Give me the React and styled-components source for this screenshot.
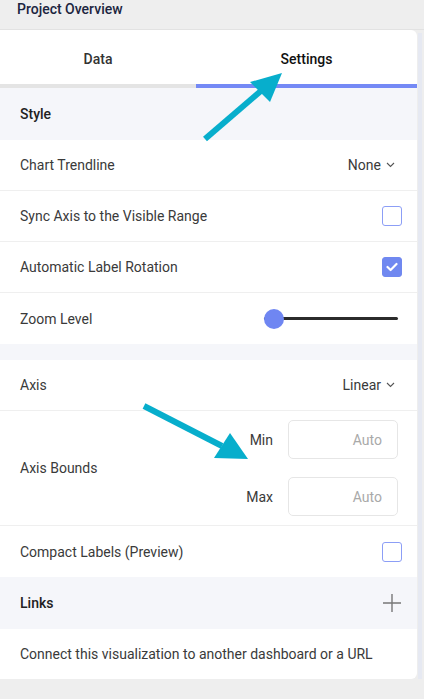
import React from 'react';
import styled, { createGlobalStyle } from 'styled-components';

const GlobalStyle = createGlobalStyle`
  html, body {
    margin: 0;
    padding: 0;
    background: #eeeeee;
  }
  body {
    font-family: Roboto, "Liberation Sans", sans-serif;
    font-size: 14px;
    color: #3a3a3a;
  }
`;

const Page = styled.div`
  position: relative;
  width: 424px;
  height: 699px;
  overflow: hidden;
  background: #eeeeee;
`;

const TopBar = styled.div`
  height: 30px;
  border-bottom: 1px solid #e2e2e2;
  padding: 1px 0 0 17px;
  display: flex;
  align-items: flex-start;
  box-sizing: border-box;
  font-size: 14px;
  font-weight: 500;
  color: #1c2540;
`;

const Body = styled.div`
  display: flex;
  align-items: stretch;
`;

const Panel = styled.div`
  width: 417px;
  background: #ffffff;
  border-radius: 0 6px 6px 0;
  overflow: hidden;
`;

const Scrollbar = styled.div`
  width: 4px;
  margin-left: 1px;
  margin-top: 3px;
  background: #e6e9f2;
`;

const Tabs = styled.div`
  display: grid;
  grid-template-columns: 196px 1fr;
`;

const Tab = styled.div`
  height: 58px;
  box-sizing: border-box;
  padding-top: 4px;
  display: flex;
  align-items: center;
  justify-content: center;
  font-weight: 500;
  color: ${p => (p.$active ? '#111111' : '#333333')};
  border-bottom: 4px solid ${p => (p.$active ? '#7489f5' : '#e4e4e4')};
`;

const SectionHead = styled.div`
  height: 52px;
  background: #f5f6fa;
  display: flex;
  align-items: center;
  justify-content: space-between;
  padding: 0 15px 0 20px;
  font-weight: 500;
  color: #222222;
`;

const Gap = styled.div`
  height: 16px;
  background: #f5f6fa;
`;

const Row = styled.div`
  height: ${p => p.$h || 51}px;
  box-sizing: border-box;
  display: flex;
  align-items: center;
  justify-content: space-between;
  padding: 0 15px 0 20px;
  border-bottom: ${p => (p.$last ? 'none' : '1px solid #efefef')};
`;

const Select = styled.div`
  display: flex;
  align-items: center;
  gap: 5px;
  margin-right: 7px;
`;

const Check = styled.div`
  width: 18px;
  height: 18px;
  border-radius: 3px;
  border: 1px solid ${p => (p.$on ? '#7088f0' : '#8c9ef6')};
  background: ${p => (p.$on ? '#7088f0' : '#ffffff')};
  display: flex;
  align-items: center;
  justify-content: center;
`;

const Slider = styled.div`
  position: relative;
  width: 134px;
  height: 20px;
  display: flex;
  align-items: center;
  margin-right: 4px;
`;

const Track = styled.div`
  flex: 1;
  height: 3px;
  background: #2b2b2b;
  border-radius: 2px;
`;

const Thumb = styled.div`
  position: absolute;
  left: 0;
  top: 0;
  width: 20px;
  height: 20px;
  border-radius: 50%;
  background: #6f86f2;
`;

const Bounds = styled.div`
  display: grid;
  grid-template-columns: auto 110px;
  column-gap: 15px;
  row-gap: 18px;
  align-items: center;
  margin-right: 4px;
`;

const BoundLabel = styled.span`
  text-align: right;
`;

const BoundInput = styled.div`
  height: 39px;
  box-sizing: border-box;
  border: 1px solid #e6e6e6;
  border-radius: 5px;
  display: flex;
  align-items: center;
  justify-content: flex-end;
  padding-right: 15px;
  color: #a9a9a9;
`;

const Desc = styled.div`
  height: 50px;
  display: flex;
  align-items: center;
  padding-left: 20px;
`;

const Arrows = styled.svg`
  position: absolute;
  left: 0;
  top: 0;
  pointer-events: none;
`;

const Chevron = () => (
  <svg width="9" height="6" viewBox="0 0 9 6">
    <polyline points="1,1 4.5,4.5 8,1" fill="none" stroke="#555" strokeWidth="1.1" />
  </svg>
);

const CheckMark = () => (
  <svg width="12" height="10" viewBox="0 0 12 10">
    <polyline points="1.5,5 4.6,8 10.5,2" fill="none" stroke="#fff" strokeWidth="2.2" strokeLinecap="round" strokeLinejoin="round" />
  </svg>
);

const Plus = () => (
  <svg width="20" height="20" viewBox="0 0 20 20">
    <path d="M10 1v18M1 10h18" stroke="#777" strokeWidth="1.4" fill="none" />
  </svg>
);

export default function App() {
  return (
    <Page>
      <GlobalStyle />
      <TopBar>Project Overview</TopBar>
      <Body>
        <Panel>
          <Tabs>
            <Tab>Data</Tab>
            <Tab $active>Settings</Tab>
          </Tabs>
          <SectionHead>Style</SectionHead>
          <Row>
            <span>Chart Trendline</span>
            <Select>None <Chevron /></Select>
          </Row>
          <Row>
            <span>Sync Axis to the Visible Range</span>
            <Check />
          </Row>
          <Row>
            <span>Automatic Label Rotation</span>
            <Check $on><CheckMark /></Check>
          </Row>
          <Row $last>
            <span>Zoom Level</span>
            <Slider>
              <Track />
              <Thumb />
            </Slider>
          </Row>
          <Gap />
          <Row>
            <span>Axis</span>
            <Select>Linear <Chevron /></Select>
          </Row>
          <Row $h={115}>
            <span>Axis Bounds</span>
            <Bounds>
              <BoundLabel>Min</BoundLabel>
              <BoundInput>Auto</BoundInput>
              <BoundLabel>Max</BoundLabel>
              <BoundInput>Auto</BoundInput>
            </Bounds>
          </Row>
          <Row $last>
            <span>Compact Labels (Preview)</span>
            <Check />
          </Row>
          <SectionHead>
            <span>Links</span>
            <Plus />
          </SectionHead>
          <Desc>Connect this visualization to another dashboard or a URL</Desc>
        </Panel>
        <Scrollbar />
      </Body>
      <Arrows width="424" height="699" viewBox="0 0 424 699">
        <line x1="205" y1="139" x2="262" y2="90" stroke="#07aecc" strokeWidth="6" />
        <polygon points="282,73 250,82 270,102" fill="#07aecc" />
        <line x1="144" y1="406" x2="222" y2="446" stroke="#07aecc" strokeWidth="6" />
        <polygon points="248,459 230,433 214,458" fill="#07aecc" />
      </Arrows>
    </Page>
  );
}
